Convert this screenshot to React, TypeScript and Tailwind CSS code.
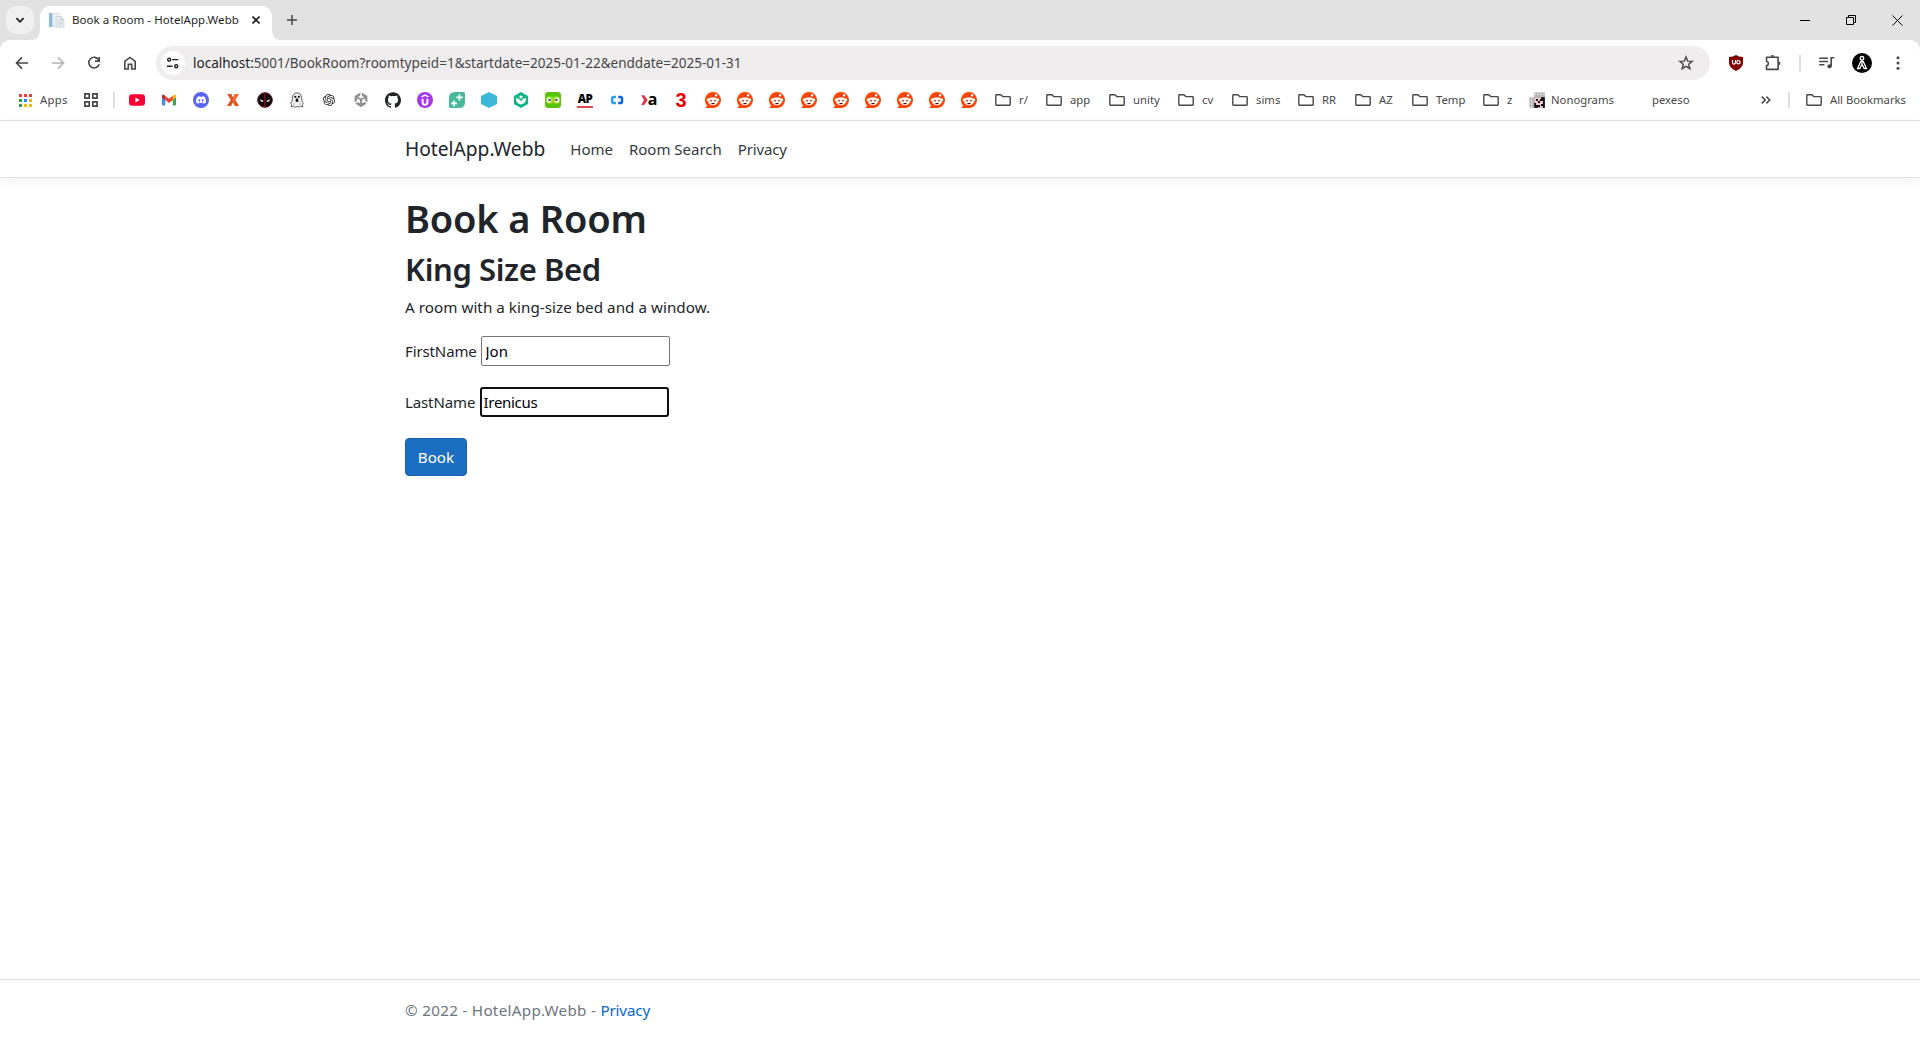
import React from 'react';
import { SiOpenai, SiUnity, SiDiscord, SiGithub } from 'react-icons/si';

const ic = 'h-4 w-4 shrink-0';

const Folder = () => (
  <svg className={ic} viewBox="0 0 16 16" fill="none" stroke="#474747" strokeWidth="1.4" strokeLinejoin="round">
    <path d="M.8 12.600V3.400q0-.7.7-.7h4.400l1.900 1.900h6.700q.7 0 .7.7v7.300q0 .7-.7.7h-13q-.7 0-.7-.7z" />
  </svg>
);

const Youtube = () => (
  <svg className={ic} viewBox="0 0 16 16">
    <rect y="2.2" width="16" height="11.6" rx="3" fill="#ff0033" />
    <path d="M6.4 5.6v4.8L10.6 8z" fill="#fff" />
  </svg>
);

const Gmail = () => (
  <svg className={ic} viewBox="0 0 16 16">
    <path d="M1 4v8.6q0 .9.9.9h2.3V6.7z" fill="#4285f4" />
    <path d="M15 4v8.6q0 .9-.9.9h-2.3V6.7z" fill="#34a853" />
    <path d="M11.8 3.8L13 2.9q2-1 2 1.2v1.4l-3.2 2.6z" fill="#fbbc04" />
    <path d="M4.2 3.8L3 2.9Q1 1.900 1 4.100v1.400l3.200 2.600z" fill="#c5221f" />
    <path d="M4.200 3.700L8 6.700l3.800-3v4.400L8 11.100 4.200 8.100z" fill="#ea4335" />
  </svg>
);

const Discord = () => (
  <span className="flex h-4 w-4 shrink-0 items-center justify-center rounded-full bg-[#5865f2] text-white">
    <SiDiscord size={10} />
  </span>
);

const OrangeX = () => (
  <svg className={ic} viewBox="0 0 16 16">
    <path d="M2.300 2h4.200L8 5.600 9.800 2h4L10.300 8l3.800 6H9.900L8 10.300 6.100 14H1.900L5.700 8z" fill="#e2541e" />
    <path d="M8 5.600L9.800 2h4L10.300 8 8 10.300z" fill="#f0713c" />
  </svg>
);

const Mask = () => (
  <svg className={ic} viewBox="0 0 16 16">
    <circle cx="8" cy="8" r="7.300" fill="#080808" stroke="#5c0c10" strokeWidth="1" />
    <path d="M7.400.8h1.200v14.400H7.400z" fill="#a0141a" />
    <path d="M2.800 7.300l3.600 1.500-.4 1.300q-2.500.2-3.200-2.800zM13.200 7.300L9.600 8.800l.4 1.300q2.500.2 3.200-2.800z" fill="#fff" />
  </svg>
);

const Ghost = () => (
  <svg className={ic} viewBox="0 0 16 16">
    <path d="M8 .8q4.200.2 4.500 5.200l.6 3.500 1.300 2.300-.9.8.2 2.300-2-.7-1.800 1.100L8 14.300l-1.900 1-1.800-1.100-2 .7.200-2.300-.9-.8 1.300-2.300L3.500 6Q3.800 1 8 .8z" fill="#f1f1f1" stroke="#555" strokeWidth=".9" />
    <circle cx="6.300" cy="4.800" r="1.100" fill="#111" />
    <circle cx="9.800" cy="4.800" r="1.100" fill="#111" />
    <ellipse cx="8" cy="8.200" rx="1.400" ry="1.900" fill="#111" />
    <path d="M5 10.500v2.500M11 10.500v2.500" stroke="#999" strokeWidth=".7" />
  </svg>
);

const Udemy = () => (
  <svg className={ic} viewBox="0 0 16 16">
    <circle cx="8" cy="8" r="8" fill="#a435f0" />
    <path d="M5.600 6.800v3.400q0 2.500 2.400 2.500t2.400-2.500V6.800" fill="none" stroke="#fff" strokeWidth="2" />
    <path d="M4.500 4.900L8 3l3.500 1.900" fill="none" stroke="#fff" strokeWidth="1.500" />
  </svg>
);

const GreenPlus = () => (
  <svg className={ic} viewBox="0 0 16 16">
    <path d="M6 0h8.500Q16 0 16 1.500V10q0 6-6 6H1.500Q0 16 0 14.500V6q0-6 6-6z" fill="#45b99c" />
    <path d="M10.500 2.300v6.200M7.400 5.400h6.400M5 8.400v6M2 11.400h6" stroke="#fff" strokeWidth="1.700" />
  </svg>
);

const Hexagon = () => (
  <svg className={ic} viewBox="0 0 16 16">
    <path d="M8 0l8 4v8l-8 4-8-4V4z" fill="#3bb8d9" />
  </svg>
);

const Leaf = () => (
  <svg className={ic} viewBox="0 0 16 16">
    <path d="M8 0l7.100 4v8L8 16 .9 12V4z" fill="#12b488" />
    <circle cx="8" cy="5" r="1.600" fill="#fff" />
    <path d="M2.900 6.300q4 .2 5.100 3.200 1.100-3 5.100-3.200-.2 5.400-5.100 6.200-4.900-.8-5.100-6.200z" fill="#fff" />
  </svg>
);

const Owl = () => (
  <svg className={ic} viewBox="0 0 16 16">
    <rect width="16" height="16" rx="3.200" fill="#5cc30c" />
    <path d="M1 6q2-3.500 7-1 5-2.500 7 1v4q-2 3-7 1-5 2-7-1z" fill="#8be024" />
    <rect x="1.800" y="5.400" width="4.400" height="5.400" rx="2.200" fill="#fff" />
    <rect x="9.800" y="5.400" width="4.400" height="5.400" rx="2.200" fill="#fff" />
    <circle cx="4.600" cy="7.900" r="1.200" fill="#4b4b4b" />
    <circle cx="11.400" cy="7.900" r="1.200" fill="#4b4b4b" />
    <path d="M6.300 9.200h3.400L8 11.800z" fill="#f5a314" />
  </svg>
);

const ApNews = () => (
  <span className="flex h-4 w-4 shrink-0 flex-col items-center justify-between border-b-2 border-[#e5484d]">
    <span className="font-['Open_Sans',sans-serif] text-[11.500px] leading-[14px] font-extrabold tracking-[-0.500px] text-black">AP</span>
  </span>
);

const Braces = () => (
  <svg className={ic} viewBox="0 0 16 16" fill="none" strokeWidth="2.500">
    <path d="M7 5H4.900Q3.200 5 3.200 6.600v2.800Q3.200 11 4.900 11H7" stroke="#2ba0fb" />
    <path d="M9.200 5h2.100Q13 5 13 6.600v2.800q0 1.600-1.700 1.600H9.200" stroke="#0a66e8" />
  </svg>
);

const ChevronA = () => (
  <span className="flex h-4 w-4 shrink-0 items-center justify-center">
    <svg className="h-4 w-[7px] shrink-0" viewBox="0 0 7 16">
      <path d="M.3 3.200h3L6.600 8l-3.300 5h-3L3 8z" fill="#dc3545" />
    </svg>
    <span className="font-['Open_Sans',sans-serif] text-[16px] leading-4 font-bold text-black">
      <span className="block -translate-y-px">a</span>
    </span>
  </span>
);

const Three = () => (
  <span className="flex h-4 w-4 shrink-0 items-center justify-center font-['Liberation_Sans',sans-serif] text-[20px] leading-4 font-bold text-[#e60000]">
    <span className="block">3</span>
  </span>
);

const Reddit = () => (
  <svg className={ic} viewBox="0 0 16 16">
    <path d="M8 0a8 8 0 1 1 0 16H.8q-.6-.1-.2-.6l1.700-1.800A8 8 0 0 1 8 0z" fill="#ff4500" />
    <circle cx="3.500" cy="7.800" r="1.600" fill="#fff" />
    <circle cx="12.500" cy="7.800" r="1.600" fill="#fff" />
    <ellipse cx="8" cy="9.200" rx="4.900" ry="4" fill="#fff" />
    <circle cx="10.900" cy="3.300" r="1.300" fill="#fff" />
    <path d="M8 5.300q.1-2 2.200-2.200" fill="none" stroke="#842400" strokeWidth=".7" />
    <circle cx="6" cy="8.600" r=".95" fill="#a03010" />
    <circle cx="10" cy="8.600" r=".95" fill="#a03010" />
    <path d="M6 10.900h4q-.5 1.300-2 1.300t-2-1.300z" fill="#3c1408" />
  </svg>
);

const Nonogram = () => (
  <svg className={ic} viewBox="0 0 16 16">
    <path d="M5 0h11v5H5zM0 5h5v11H0z" fill="#dcdcdc" />
    <path d="M5 1.500h11M5 3.500h11M1.500 5v11M3.500 5v11M7.500 0v5M10.500 0v5M13.500 0v5M0 7.500h5M0 10.500h5M0 13.500h5" stroke="#a8a8a8" strokeWidth=".6" />
    <path d="M5 5h11v11H5z" fill="#eec9cd" />
    <path d="M12 5h4v11h-2v-2h-2v-2h2V9h-3V7h1zM7 7h2v2H7zM5 11h2v2h4v2H9v1H5zM9 9h2v2H9z" fill="#111" />
    <path d="M5 5h11v11H5z" fill="none" stroke="#777" strokeWidth=".6" />
  </svg>
);

const AppsGrid = () => (
  <svg className="h-[13px] w-[13px] shrink-0" viewBox="0 0 13 13">
    <path d="M0 0h3v3H0zM5 0h3v3H5zM10 0h3v3h-3z" fill="#ea4335" />
    <path d="M0 5h3v3H0zM0 10h3v3H0z" fill="#34a04f" />
    <path d="M5 5h3v3H5z" fill="#2684fc" />
    <path d="M10 5h3v3h-3zM5 10h3v3H5zM10 10h3v3h-3z" fill="#fbb404" />
  </svg>
);

const folders = [
  { label: 'r/', box: 'w-[51px]' },
  { label: 'app', box: 'w-[63px]' },
  { label: 'unity', box: 'w-[69px]' },
  { label: 'cv', box: 'w-[54px]' },
  { label: 'sims', box: 'w-[66px]' },
  { label: 'RR', box: 'w-[57px]' },
  { label: 'AZ', box: 'w-[57px]' },
  { label: 'Temp', box: 'w-[71px]' },
  { label: 'z', box: 'w-[46px]' },
];

function TabStrip() {
  return (
    <div className="flex h-10 items-end bg-[#e2e2e2]">
      <button className="mb-1.5 ml-1.5 flex h-7 w-7 items-center justify-center rounded-[10px] bg-[#f1f1f1]">
        <svg className="h-2 w-2.5" viewBox="0 0 10 8" fill="none" stroke="#1f1f1f" strokeWidth="1.800">
          <path d="M1.400 2.200L5 5.800 8.600 2.200" />
        </svg>
      </button>
      <div className="relative ml-1.5 flex h-[34px] w-[232px] items-start rounded-t-[10px] bg-white pt-1.5 pl-[9px]">
        <svg className="absolute -left-2.5 bottom-0 h-2.5 w-2.5" viewBox="0 0 10 10">
          <path d="M10 0v10H0Q10 10 10 0z" fill="#fff" />
        </svg>
        <svg className="absolute -right-2.5 bottom-0 h-2.5 w-2.5" viewBox="0 0 10 10">
          <path d="M0 0v10h10Q0 10 0 0z" fill="#fff" />
        </svg>
        <svg className={ic} viewBox="0 0 16 16">
          <path d="M0 1h3.500v14H0z" fill="#8db9dc" />
          <path d="M4 1.500h6.500v13H4z" fill="#eef2f5" stroke="#d3dbe1" strokeWidth=".7" />
          <path d="M7 4.500h5l3 3v7.700H7z" fill="#e9edf0" stroke="#c6d0d7" strokeWidth=".7" />
          <path d="M12 4.500v3h3" fill="none" stroke="#b3c0c9" strokeWidth=".7" />
          <path d="M8.500 9h5M8.500 11h5M8.500 13h4" stroke="#c4ccd2" strokeWidth=".8" />
        </svg>
        <span className="ml-[7px] w-[176px] text-[11.500px] leading-4 tracking-[0.050px] whitespace-nowrap text-[#1f1f1f]">
          Book a Room - HotelApp.Webb
        </span>
        <svg className="mt-1 ml-1 h-2 w-2" viewBox="0 0 8 8" stroke="#1f1f1f" strokeWidth="1.600">
          <path d="M.5.5l7 7M7.500.5l-7 7" />
        </svg>
      </div>
      <svg className="mb-[15px] ml-[15px] h-2.5 w-2.5" viewBox="0 0 10 10" stroke="#444" strokeWidth="1.500">
        <path d="M5 0v10M0 5h10" />
      </svg>
      <div className="mr-[17px] mb-[14px] ml-auto flex gap-[35px] text-black">
        <svg className="h-[11px] w-[11px]" viewBox="0 0 11 11" stroke="currentColor">
          <path d="M0 5.500h10" />
        </svg>
        <svg className="h-[11px] w-[11px]" viewBox="0 0 11 11" fill="none" stroke="currentColor">
          <path d="M.5 2.500h7v7h-7zM2.500 2.500v-2h7v7h-2" />
        </svg>
        <svg className="h-[11px] w-[11px]" viewBox="0 0 11 11" stroke="currentColor">
          <path d="M.5.5l10 10M10.500.5l-10 10" />
        </svg>
      </div>
    </div>
  );
}

function Toolbar() {
  return (
    <div className="flex h-[46px] items-center rounded-t-[10px] bg-white pr-[14px] pl-[14px]">
      <div className="flex gap-5 text-[#474747]">
        <svg className={ic} viewBox="0 0 16 16" fill="none" stroke="currentColor" strokeWidth="1.600">
          <path d="M14 8H3M8 2.400L2.500 8 8 13.600" />
        </svg>
        <svg className="h-4 w-4 shrink-0 text-[#b3b3b3]" viewBox="0 0 16 16" fill="none" stroke="currentColor" strokeWidth="1.600">
          <path d="M2 8h11M8 2.400L13.500 8 8 13.600" />
        </svg>
        <svg className={ic} viewBox="0 0 16 16" fill="none" stroke="currentColor" strokeWidth="1.600">
          <path d="M12.800 5.100A5.300 5.300 0 1 0 13.200 9.200" />
          <path d="M13.200 1.900v4.200H9" />
        </svg>
        <svg className={ic} viewBox="0 0 16 16" fill="none" stroke="currentColor" strokeWidth="1.600">
          <path d="M2.800 14V6.300L8 2.400l5.200 3.900V14H9.700V9.300H6.300V14z" />
        </svg>
      </div>
      <div className="ml-[18px] flex h-[34px] w-[1554px] items-center rounded-full bg-[#efedee] pr-4 pl-[5px]">
        <span className="flex h-6 w-6 items-center justify-center rounded-full bg-white">
          <svg className="h-3 w-3" viewBox="0 0 12 12" fill="none" stroke="#1f1f1f" strokeWidth="1.400">
            <circle cx="2.200" cy="2.600" r="1.500" />
            <path d="M5.200 2.600h6M0 9.200h5.500" />
            <circle cx="9.200" cy="9.200" r="1.500" />
          </svg>
        </span>
        <span className="ml-2 text-[13.500px] leading-5 tracking-[0.010px] whitespace-nowrap text-[#474747]">
          <span className="text-[#1f1f1f]">localhost:</span>5001/BookRoom?roomtypeid=1&amp;startdate=2025-01-22&amp;enddate=2025-01-31
        </span>
        <svg className="ml-auto h-4 w-4" viewBox="0 0 16 16" fill="none" stroke="#474747" strokeWidth="1.400">
          <path d="M8 1.900l1.700 4.200 4.500.3-3.500 2.900 1.200 4.400L8 11.300l-3.900 2.400 1.200-4.400-3.500-2.900 4.500-.3z" />
        </svg>
      </div>
      <svg className="ml-[18px] h-4 w-4" viewBox="0 0 16 16">
        <path d="M8 0q2.600 2 7 2v5.500Q15 13 8 16 1 13 1 7.500V2q4.400 0 7-2z" fill="#800000" />
        <path d="M4.500 5v2.600q0 1.600 1.500 1.600t1.500-1.600V5" fill="none" stroke="#fff" strokeWidth="1.200" />
        <circle cx="10.400" cy="7.200" r="1.700" fill="none" stroke="#fff" strokeWidth="1.200" />
      </svg>
      <svg className="ml-5 h-[18px] w-[18px]" viewBox="0 0 18 18" fill="none" stroke="#474747" strokeWidth="1.600" strokeLinejoin="round">
        <path d="M2.500 3.200h11.600v12.200H2.500v-3.800q1.900-.3 1.900-2.200t-1.900-2.200z" />
        <path d="M6.500 2.800a1.900 1.900 0 0 1 3.800 0zM14.500 7.400a1.900 1.900 0 0 1 0 3.800z" fill="#474747" stroke="none" />
      </svg>
      <span className="ml-[17px] h-4 w-0.5 bg-[#dedede]" />
      <svg className="ml-[18px] h-4 w-4" viewBox="0 0 16 16" fill="none" stroke="#474747" strokeWidth="1.600">
        <path d="M.2 3.300h8.800M.2 6.500h8.800M.2 9.700h5.200M12.200 11.400V2.800h3.200" />
        <circle cx="10.500" cy="11.300" r="2.100" fill="#474747" stroke="none" />
      </svg>
      <svg className="ml-[17px] h-5 w-5" viewBox="0 0 20 20" fill="none" stroke="#fff" strokeWidth="1.300">
        <circle cx="10" cy="10" r="10" fill="#000" stroke="none" />
        <circle cx="10" cy="5.300" r="1.800" />
        <path d="M10 7.100v3.900M8.900 8L5.600 15.500h2.200L10 11.300l2.200 4.200h2.200L11.100 8" />
      </svg>
      <svg className="ml-[18px] h-4 w-4" viewBox="0 0 16 16" fill="#474747">
        <circle cx="8" cy="2.800" r="1.500" />
        <circle cx="8" cy="8" r="1.500" />
        <circle cx="8" cy="13.200" r="1.500" />
      </svg>
    </div>
  );
}

function BookmarksBar() {
  return (
    <div className="flex h-[35px] items-center border-b border-[#dfe1e1] bg-white pb-[6px] pl-[19px] text-[11.300px] leading-4 whitespace-nowrap text-[#474747]">
      <AppsGrid />
      <span className="ml-2 w-11 tracking-[0.300px]">Apps</span>
      <svg className="h-[14px] w-[14px] shrink-0" viewBox="0 0 14 14" fill="none" stroke="#474747" strokeWidth="1.700">
        <path d="M.9.9h4.300v4.300H.9zM8.800.9h4.300v4.300H8.800zM.9 8.800h4.300v4.300H.9zM8.800 8.800h4.300v4.300H8.800z" />
      </svg>
      <span className="mr-[14px] ml-[15px] h-4 w-0.5 shrink-0 bg-[#dedede]" />
      <div className="flex gap-4">
        <Youtube />
        <Gmail />
        <Discord />
        <OrangeX />
        <Mask />
        <Ghost />
        <span className="flex h-4 w-4 shrink-0 items-center justify-center text-[#222]">
          <SiOpenai size={12} />
        </span>
        <svg className={ic} viewBox="0 0 16 16" fill="#919191">
          <path d="M7.300.6v3L5.100 4.900 8 6.600l2.900-1.700-2.200-1.300v-3l5.700 3.300v6.300l-2.500-1.500V6.200L9 7.900v3.400l2.200-1.300 2.500 1.500L8 15.200l-5.700-3.700L4.800 10 7 11.300V7.900L4.100 6.200v2.500l-2.500 1.500V3.900z" />
        </svg>
        <span className="flex h-4 w-4 shrink-0 items-center justify-center text-[#1f2328]">
          <SiGithub size={16} />
        </span>
        <Udemy />
        <GreenPlus />
        <Hexagon />
        <Leaf />
        <Owl />
        <ApNews />
        <Braces />
        <ChevronA />
        <Three />
        {Array.from({ length: 9 }, (_, i) => (
          <Reddit key={i} />
        ))}
      </div>
      <div className="ml-[18px] flex">
        {folders.map((f) => (
          <span key={f.label} className={`flex shrink-0 items-center gap-2 ${f.box}`}>
            <Folder />
            {f.label}
          </span>
        ))}
        <span className="flex w-[123px] items-center gap-1.5">
          <Nonogram />
          Nonograms
        </span>
        <span>pexeso</span>
      </div>
      <div className="mr-[14px] ml-auto flex items-center">
        <svg className="h-2 w-2.5" viewBox="0 0 10 8" fill="none" stroke="#474747" strokeWidth="1.500">
          <path d="M.8.6L4.200 4 .8 7.400M5.400.6L8.800 4 5.400 7.400" />
        </svg>
        <span className="mr-4 ml-[17px] h-4 w-0.5 bg-[#dedede]" />
        <Folder />
        <span className="ml-2">All Bookmarks</span>
      </div>
    </div>
  );
}

export default function App() {
  return (
    <div className="flex h-[1040px] w-[1920px] flex-col overflow-hidden bg-white font-['Noto_Sans',sans-serif] text-[15.200px] leading-6 text-[#212529]">
      <div className="bg-[#e2e2e2]">
        <TabStrip />
        <Toolbar />
        <BookmarksBar />
      </div>

      <header className="border-b border-[#dee2e6] shadow-[0_4px_12px_rgba(0,0,0,0.05)]">
        <nav className="mx-auto flex h-14 w-[1140px] items-center px-[15px]">
          <a className="mr-[25px] text-[19.200px] leading-[30px] text-[#212529]">HotelApp.Webb</a>
          <ul className="flex gap-4 text-[15px] text-[#343a40]">
            <li>Home</li>
            <li>Room Search</li>
            <li className="tracking-[-0.150px]">Privacy</li>
          </ul>
        </nav>
      </header>

      <main className="mx-auto w-[1140px] grow px-[15px] pt-4">
        <h1 className="text-[38px] leading-[48px] font-semibold tracking-[-0.200px]">Book a Room</h1>
        <h2 className="mt-2 text-[31px] leading-[38px] font-semibold tracking-[-0.400px]">King Size Bed</h2>
        <p className="mt-[7px] tracking-[0.040px]">A room with a king-size bed and a window.</p>
        <form className="mt-[17px] flex flex-col items-start">
          <div className="flex items-center">
            <label className="w-[76px] text-[15px] tracking-[-0.120px]">FirstName</label>
            <input readOnly value="Jon" className="h-[30px] w-[189px] rounded-[2px] border border-[#767676] bg-white pl-[3.500px] text-[15px] text-black outline-none" />
          </div>
          <div className="mt-[21px] flex items-center">
            <label className="w-[75px] text-[15px] tracking-[-0.120px]">LastName</label>
            <input readOnly value="Irenicus" className="h-[30px] w-[189px] rounded-[3px] border-2 border-[#101010] bg-white pl-[1.500px] text-[15px] tracking-[-0.300px] text-black outline-none" />
          </div>
          <button type="button" className="mt-[21px] h-[38px] w-[62px] rounded-[4px] border border-[#1861ac] bg-[#1b6ec2] text-center text-[15.200px] text-white">
            Book
          </button>
        </form>
      </main>

      <footer className="border-t border-[#dee2e6] text-[#6c757d]">
        <div className="mx-auto h-[60px] w-[1140px] px-[15px] pt-[18px] tracking-[0.300px]">
          &copy; 2022 - HotelApp.Webb - <a className="tracking-[-0.150px] text-[#0366d6]">Privacy</a>
        </div>
      </footer>
    </div>
  );
}
